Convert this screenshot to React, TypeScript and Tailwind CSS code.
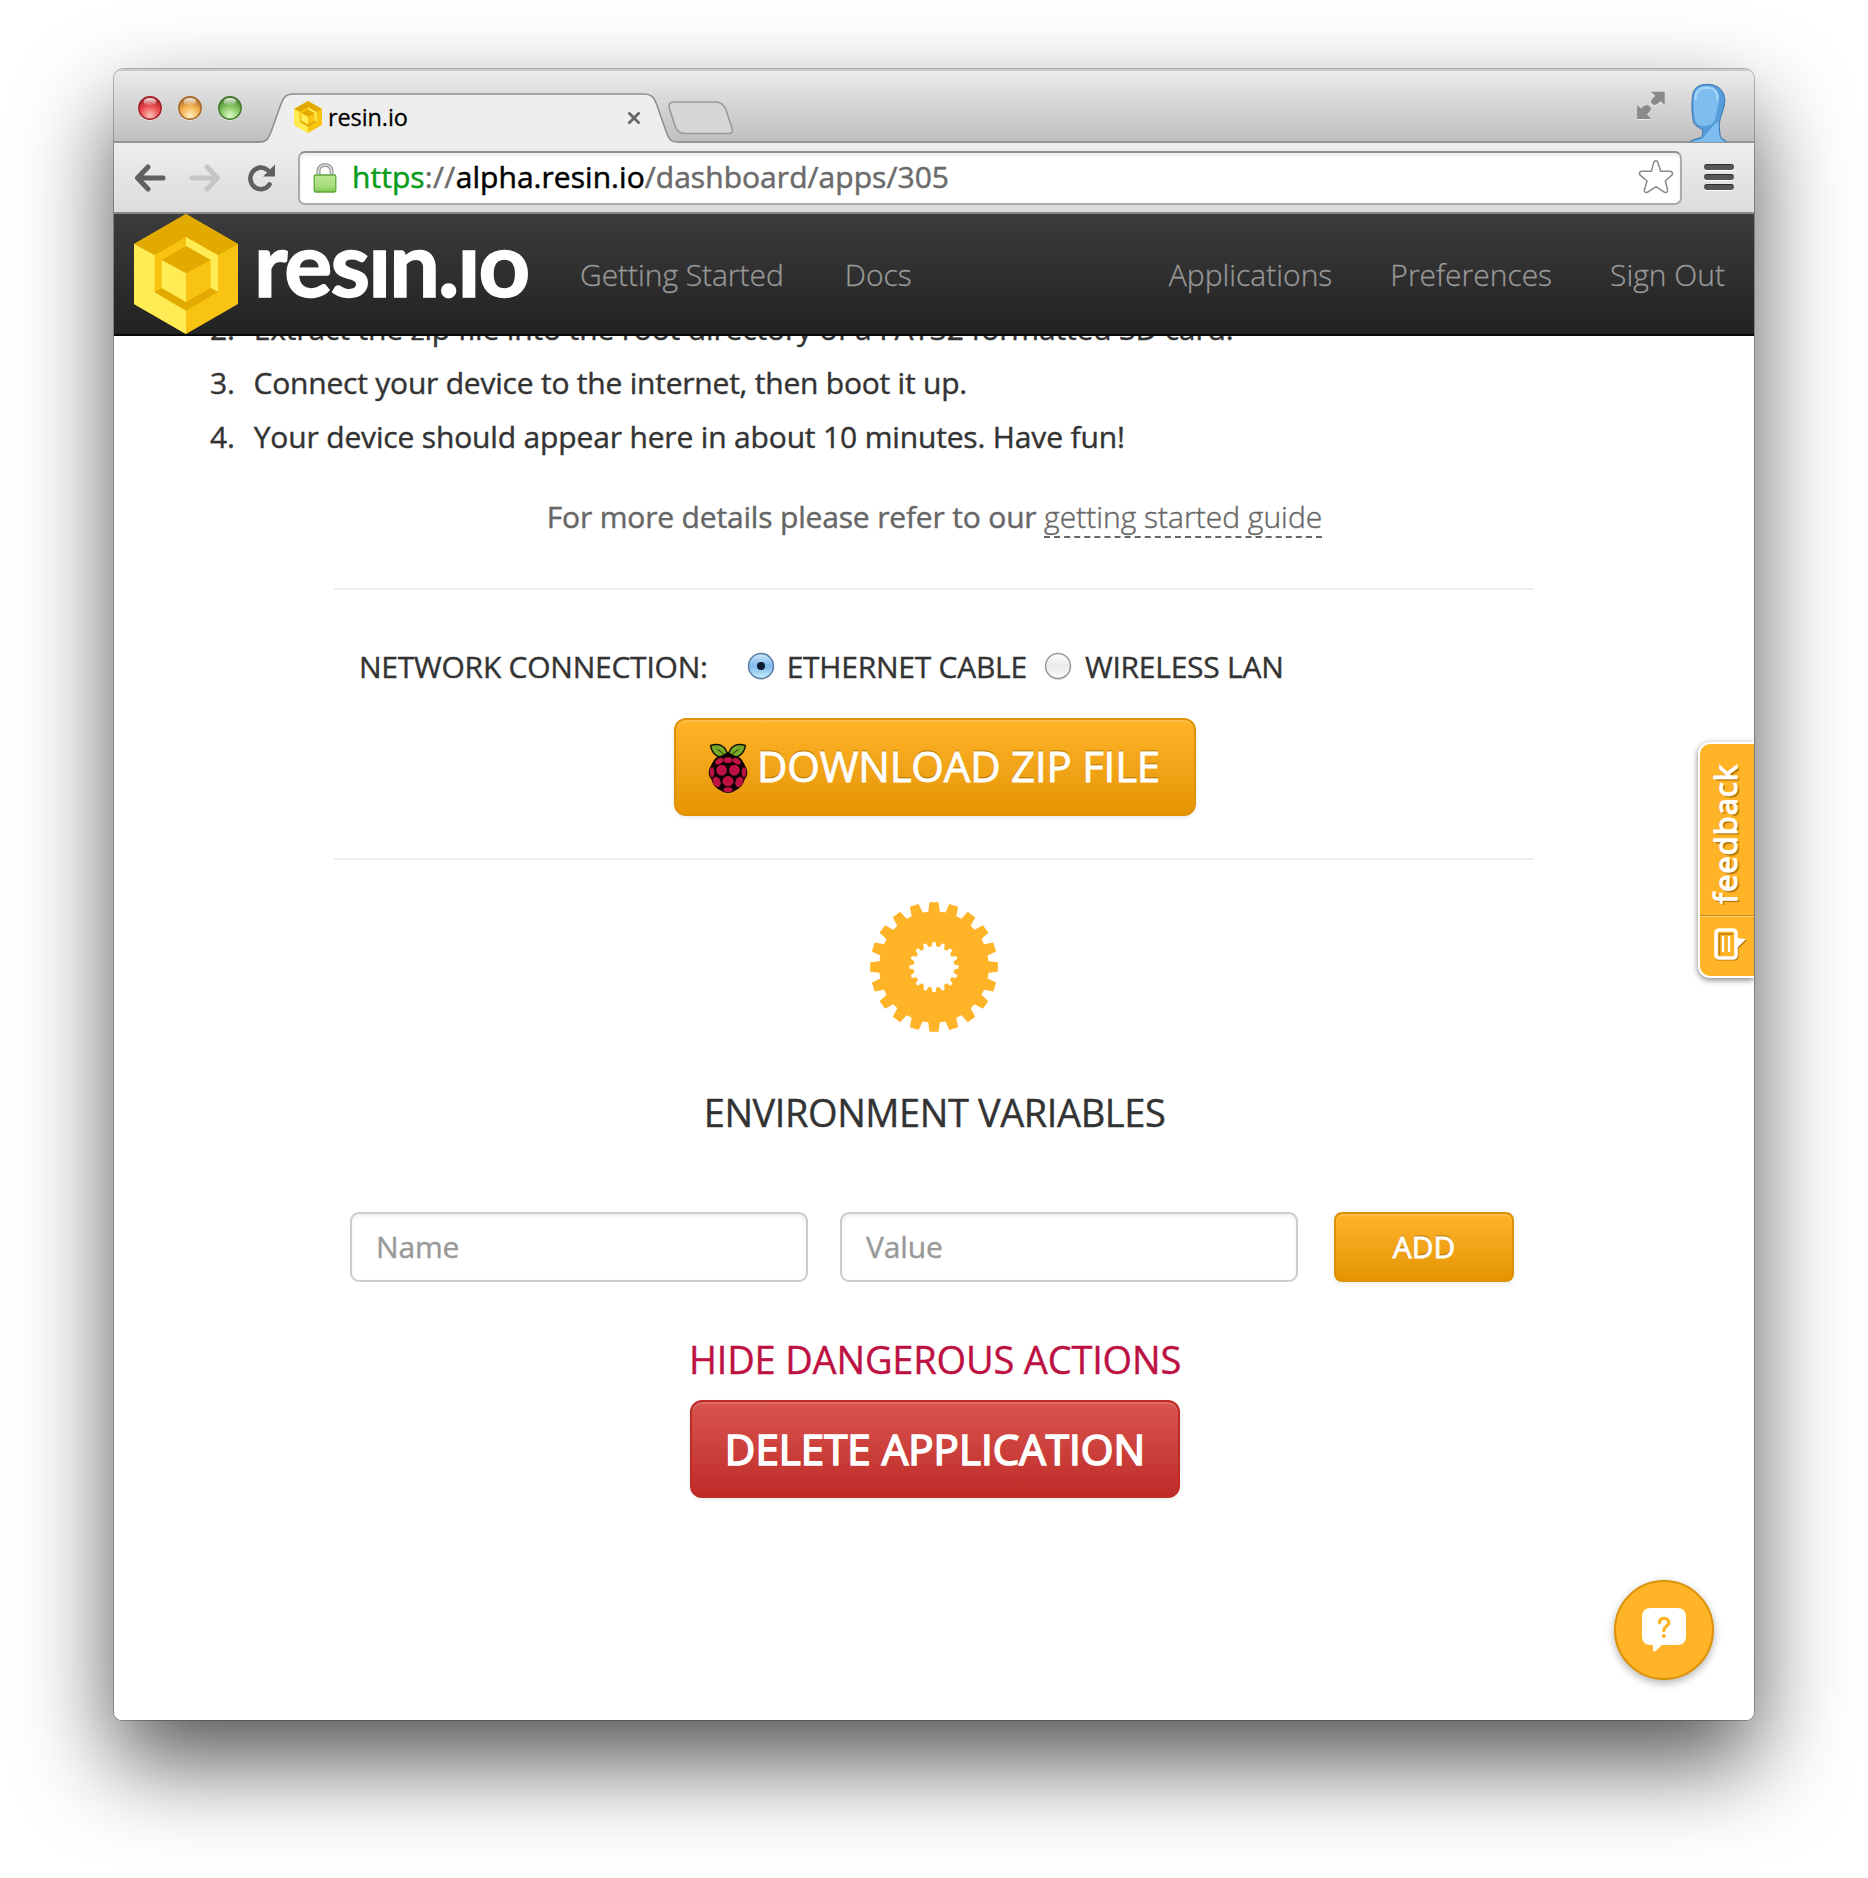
import React from "react";

const ORANGE = "#ffb327";

function CubeLogo({ className }: { className: string }) {
  return (
    <svg viewBox="42 42 312 360" className={className} preserveAspectRatio="none">
      <polygon points="198,42 354,132 354,312 198,402 42,312 42,132" fill="#f8c411" />
      <polygon points="198,42 354,132 294,166 198,111 104,166 42,132" fill="#e2a900" />
      <polygon points="42,132 104,166 104,276 198,332 198,402 42,312" fill="#ffeb53" />
      <polygon points="198,111 294,166 294,276 272,264 272,180 198,138" fill="#ffeb53" />
      <polygon points="104,276 125,264 198,306 272,264 294,276 198,332" fill="#e2a900" />
      <polygon points="198,138 272,180 198,220 125,180" fill="#e2a900" />
      <polygon points="125,180 198,220 198,306 125,264" fill="#ffeb53" />
    </svg>
  );
}

function Light({ id, edge, core, glow }: { id: string; edge: string; core: string; glow: string }) {
  return (
    <svg viewBox="0 0 24 26" className="h-[26px] w-6">
      <defs>
        <radialGradient id={id} cx="50%" cy="85%" r="80%">
          <stop offset="0" stopColor={glow} />
          <stop offset="0.55" stopColor={core} />
          <stop offset="1" stopColor={edge} />
        </radialGradient>
        <linearGradient id={id + "g"} x1="0" y1="0" x2="0" y2="1">
          <stop offset="0" stopColor="#fff" stopOpacity="0.9" />
          <stop offset="1" stopColor="#fff" stopOpacity="0.05" />
        </linearGradient>
      </defs>
      <circle cx="12" cy="13.2" r="11.6" fill="#fff" opacity="0.45" />
      <circle cx="12" cy="12" r="11.2" fill={`url(#${id})`} stroke={edge} strokeWidth="1.4" />
      <ellipse cx="12" cy="5.8" rx="6.4" ry="3.8" fill={`url(#${id}g)`} />
    </svg>
  );
}

function TitleBar() {
  return (
    <div className="flex h-[74px] shrink-0 items-start border-t-2 border-b-2 border-t-[#c9c9c9] border-b-[#949494] bg-linear-to-b from-[#ebebeb] to-[#bfbfbf] pl-6">
      <div className="mt-[25px] flex gap-4">
        <Light id="r" edge="#a3222a" core="#ee4d4f" glow="#fbc3b8" />
        <Light id="y" edge="#a8682a" core="#f4b04c" glow="#fff0c4" />
        <Light id="g" edge="#417a2b" core="#85c660" glow="#e0f9c8" />
      </div>
      <div className="relative mt-[22px] ml-[18px] h-[50px] w-[418px]">
        <svg viewBox="0 0 418 50" className="absolute inset-0 h-[50px] w-[418px]">
          <path
            d="M0 49 C7 49 9 44 11 39 L21 11 C23.500 4 26 1 33 1 H384 C391 1 394 4 396.500 11 L407 41 C409.500 47 411 49 418 49 V50 H0 Z"
            fill="#eeeeee"
          />
          <path
            d="M0 49 C7 49 9 44 11 39 L21 11 C23.500 4 26 1 33 1 H384 C391 1 394 4 396.500 11 L407 41 C409.500 47 411 49 418 49"
            fill="none"
            stroke="#8f8f8f"
            strokeWidth="1.6"
          />
        </svg>
        <div className="relative flex items-center pt-2 pl-[34px]">
          <CubeLogo className="h-8 w-7" />
          <span className="ml-[6px] text-[23.500px] leading-8 tracking-[-0.100px] text-black [-webkit-text-stroke:0.3px]">resin.io</span>
          <svg viewBox="0 0 14 14" className="mt-px mr-[37px] ml-auto h-3.5 w-3.5">
            <path d="M1.500 1.500 L12.500 12.500 M12.500 1.500 L1.500 12.500" stroke="#666" strokeWidth="2.800" />
          </svg>
        </div>
      </div>
      <svg viewBox="0 0 66 34" className="mt-[30px] -ml-2.5 h-[34px] w-[66px]">
        <path
          d="M5 1 H48 C53 1 56 4 58 9 L64 27 C65 31 64 32.500 60 32.500 H17 C12 32.500 9 30 7.500 26 L1.500 8 C0.500 4 1 1 5 1 Z"
          fill="#d6d6d6"
          stroke="#9a9a9a"
          strokeWidth="1.600"
        />
      </svg>
      <svg viewBox="48 62 86 88" className="mt-5 ml-auto h-[29px] w-[28.500px]">
        <g fill="#fff" opacity="0.6" transform="translate(0 3)">
          <path d="M90 64 H132 V105 L120 93 L106 104 Q92 104 91 92 Q94 84 103 77 Z" />
          <path d="M48 105 L61 116 Q68 104 80 105 Q91 109 90 118 Q88 126 78 133 L91 147 H48 Z" />
        </g>
        <path d="M90 64 H132 V105 L120 93 L106 104 Q92 106 90 94 Q92 86 103 77 Z" fill="#8a8a8a" />
        <path d="M48 105 L61 116 Q68 104 80 105 Q91 109 90 118 Q88 126 78 133 L91 147 H48 Z" fill="#8a8a8a" />
      </svg>
      <svg viewBox="207 38 114 178" className="mt-[12px] mr-[27px] ml-[24px] h-[59px] w-[38px]">
        <path
          d="M208 218 C214 207 235 207 246 200 L249 182 C243 173 228 172 221 158 C215 135 214 105 217 78 C219 52 238 42 262 42 C292 42 314 58 315 90 C315 115 302 135 299 155 C297 175 300 195 303 204 C310 208 318 211 321 218 Z"
          fill="#559cd8"
          stroke="#3f76ae"
          strokeWidth="3"
        />
        <path
          d="M222 82 C219 110 221 140 227 156 C234 168 252 172 262 166 C272 166 282 158 286 145 C290 128 292 112 297 98 C301 68 290 48 262 47 C235 47 223 58 222 82 Z"
          fill="#7ebdf0"
        />
        <path d="M226 90 C226 60 240 52 262 52 C284 53 295 66 292 90" fill="none" stroke="#a5d5f8" strokeWidth="7" />
        <path d="M284 162 L297 154 C294 178 297 198 304 208 L316 218 H214 C224 209 244 212 253 200 C262 186 274 178 284 162 Z" fill="#7ebdf0" />
      </svg>
    </div>
  );
}

function Toolbar() {
  return (
    <div className="flex h-[71px] shrink-0 items-center border-b-2 border-[#8a8a8a] bg-linear-to-b from-[#eeeeee] to-[#dcdcdc] pl-5">
      <svg viewBox="0 0 32 28" className="h-7 w-8" fill="none" stroke="#5f5f5f" strokeWidth="5" strokeLinecap="round" strokeLinejoin="round">
        <path d="M14 3 L3.500 14 L14 25 M4.500 14 H29" />
      </svg>
      <svg viewBox="0 0 32 28" className="ml-[23px] h-7 w-8" fill="none" stroke="#c6c6c6" strokeWidth="5" strokeLinecap="round" strokeLinejoin="round">
        <path d="M18 3 L28.500 14 L18 25 M27.500 14 H3" />
      </svg>
      <svg viewBox="0 0 28 28" className="ml-[27px] h-7 w-7">
        <path d="M21.500 20.500 A10.500 10.800 0 1 1 19.500 6" fill="none" stroke="#5f5f5f" strokeWidth="4.600" strokeLinecap="round" />
        <path d="M27 0.500 V12.500 H15 Z" fill="#5f5f5f" />
      </svg>
      <div className="ml-[22px] flex h-[54px] w-[1384px] items-center rounded-[7px] border-2 border-[#ababab] border-t-[#8f8f8f] bg-white pr-[6px] pl-[13px] shadow-[inset_0_3px_3px_rgba(0,0,0,0.07)]">
        <svg viewBox="0 0 24 30" className="h-[30px] w-6">
          <defs>
            <linearGradient id="lock" x1="0" y1="0" x2="0" y2="1">
              <stop offset="0" stopColor="#bfe896" />
              <stop offset="0.700" stopColor="#a3dc78" />
              <stop offset="1" stopColor="#7cc251" />
            </linearGradient>
          </defs>
          <path d="M5.500 13 V8 C5.500 0 18.500 0 18.500 8 V13" fill="none" stroke="#989898" strokeWidth="4" />
          <path d="M5.500 13 V8 C5.500 0 18.500 0 18.500 8 V13" fill="none" stroke="#e2e2e2" strokeWidth="1.600" />
          <rect x="1.200" y="12" width="21.600" height="17" rx="1.500" fill="url(#lock)" stroke="#5fa83b" strokeWidth="1.300" />
        </svg>
        <div className="-mt-0.5 ml-[15px] text-[30px] leading-[46px] tracking-[0.040px] whitespace-nowrap text-[#6b6b6b] [-webkit-text-stroke:0.500px]">
          <span className="text-[#0a9c1a]">https</span>
          <span className="tracking-[0.400px]">://</span>
          <span className="text-black">alpha.resin.io</span>/dashboard/apps/305
        </div>
        <svg viewBox="54 268 106 102" className="-mt-0.5 ml-auto h-[34px] w-9" fill="none" stroke="#8a8a8a" strokeWidth="4.500" strokeLinejoin="round">
          <path d="M101 273 Q107 267 112 273 L121 302 L150 302 Q159 305 156 312 L135 331 L142 358 Q142 367 133 365 L107 348 L81 365 Q72 367 72 358 L80 331 L58 312 Q55 304 64 302 L93 302 Z" />
        </svg>
      </div>
      <div className="-mt-px ml-[22px] flex flex-col gap-1">
        <div className="h-[6px] w-[30px] rounded-[3px] border-t border-[#2e2e2e] bg-[#565656] shadow-[0_1px_0_#fff]" />
        <div className="h-[6px] w-[30px] rounded-[3px] border-t border-[#2e2e2e] bg-[#565656] shadow-[0_1px_0_#fff]" />
        <div className="h-[6px] w-[30px] rounded-[3px] border-t border-[#2e2e2e] bg-[#565656] shadow-[0_1px_0_#fff]" />
      </div>
    </div>
  );
}

function NavBar() {
  return (
    <nav className="flex h-[122px] shrink-0 items-center border-b-2 border-[#080808] bg-linear-to-b from-[#3c3c3c] to-[#222222] pr-[29px] pl-5 text-[30px] leading-10 font-light text-[#999999] [-webkit-text-stroke:0.3px]">
      <CubeLogo className="h-[120px] w-[104px]" />
      <div className="ml-4 h-[50px] w-[286px] overflow-hidden">
        <div className="-mt-3 font-['Lato'] text-[90px] leading-[50px] font-bold tracking-[-1.900px] whitespace-nowrap text-white [-webkit-text-stroke:1.5px]">resin.io</div>
      </div>
      <a className="mt-0.5 ml-10 tracking-[-0.050px]">Getting Started</a>
      <a className="mt-0.5 ml-[61px]">Docs</a>
      <a className="mt-0.5 ml-auto">Applications</a>
      <a className="mt-0.5 ml-[58px]">Preferences</a>
      <a className="mt-0.5 ml-[58px]">Sign Out</a>
    </nav>
  );
}

function Radio({ checked }: { checked?: boolean }) {
  const id = checked ? "radio-on" : "radio-off";
  return (
    <svg viewBox="0 0 28 28" className="h-7 w-7">
      <defs>
        <linearGradient id={id} x1="0" y1="0" x2="0" y2="1">
          <stop offset="0" stopColor={checked ? "#cfe6fa" : "#ffffff"} />
          <stop offset="0.500" stopColor={checked ? "#7db9ec" : "#e9e9e9"} />
          <stop offset="1" stopColor={checked ? "#c9f0ff" : "#fbfbfb"} />
        </linearGradient>
      </defs>
      <circle cx="14" cy="15" r="13" fill="#000" opacity="0.120" />
      <circle cx="14" cy="14" r="12.500" fill={`url(#${id})`} stroke={checked ? "#5a7fa8" : "#9b9b9b"} strokeWidth="1.500" />
      {checked && <circle cx="14" cy="14" r="4" fill="#0b1a30" />}
    </svg>
  );
}

function Raspberry() {
  return (
    <svg viewBox="54 40 120 152" className="mt-0.5 h-[51px] w-10">
      <g fill="#75a928" stroke="#101008" strokeWidth="4.500" strokeLinejoin="round">
        <path d="M113 80 C88 88 66 76 62 47 C86 40 110 46 113 80 Z" />
        <path d="M115 80 C140 88 162 76 166 47 C142 40 118 46 115 80 Z" />
      </g>
      <path d="M82 58 L108 78 M146 58 L120 78" stroke="#101008" strokeWidth="2.500" />
      <path
        d="M114 66 C126 78 145 78 154 88 C161 96 162 104 168 112 C174 126 173 138 164 148 C160 166 148 176 134 183 C124 192 104 192 94 183 C80 176 68 166 64 148 C55 138 54 126 60 112 C66 104 67 96 74 88 C83 78 102 78 114 66 Z"
        fill="#0d0005"
      />
      <g fill="#bc1142">
        <ellipse cx="88" cy="94" rx="13" ry="8.500" transform="rotate(-32 88 94)" />
        <ellipse cx="140" cy="94" rx="13" ry="8.500" transform="rotate(32 140 94)" />
        <ellipse cx="114" cy="91" rx="13" ry="8.500" />
        <ellipse cx="95" cy="121" rx="16" ry="16.500" />
        <ellipse cx="133" cy="121" rx="16" ry="16.500" />
        <ellipse cx="66" cy="127" rx="6.500" ry="15" />
        <ellipse cx="162" cy="127" rx="6.500" ry="15" />
        <ellipse cx="114" cy="154" rx="16.500" ry="15.500" />
        <ellipse cx="80" cy="156" rx="11.500" ry="16" transform="rotate(-22 80 156)" />
        <ellipse cx="148" cy="156" rx="11.500" ry="16" transform="rotate(22 148 156)" />
        <ellipse cx="114" cy="180" rx="14" ry="7.500" />
      </g>
    </svg>
  );
}

// Closed outline of a toothed ring; base and tip are tooth widths at the root and outer radii.
function toothedRing(n: number, root: number, outer: number, base: number, tip: number) {
  const points: string[] = [];
  for (let i = 0; i < n; i++) {
    const a = (i * 2 * Math.PI) / n - Math.PI / 2;
    const at = (r: number, half: number) => {
      const d = Math.sqrt(r * r - half * half);
      return `${(195 + d * Math.cos(a) - half * Math.sin(a)).toFixed(1)},${(195 + d * Math.sin(a) + half * Math.cos(a)).toFixed(1)}`;
    };
    points.push(at(root, -base / 2), at(outer, -tip / 2), at(outer, tip / 2), at(root, base / 2));
  }
  return points.join(" ");
}

function Gear() {
  return (
    <svg viewBox="0 0 390 390" preserveAspectRatio="none" className="h-[130px] w-[128px]">
      <polygon points={toothedRing(20, 167, 195, 35, 28)} fill={ORANGE} />
      <polygon points={toothedRing(16, 62, 75, 15, 9)} fill="#fff" />
    </svg>
  );
}

const primary =
  "border-2 border-[#de9306] bg-linear-to-b from-[#ffb327] to-[#e59500] text-white shadow-[inset_0_2px_0_rgba(255,255,255,0.15),0_2px_4px_rgba(0,0,0,0.08)] [-webkit-text-stroke:0.800px] [text-shadow:0_-2px_0_rgba(0,0,0,0.2)]";

const field =
  "h-[70px] w-[458px] rounded-[9px] border-2 border-[#cccccc] bg-white px-6 pb-0.5 text-[30px] tracking-[-0.150px] placeholder-[#999999] shadow-[inset_0_2px_4px_rgba(0,0,0,0.07)] outline-none [-webkit-text-stroke:0.4px]";

function Content() {
  return (
    <main className="relative min-h-0 flex-1 overflow-hidden bg-white text-[#333333] [-webkit-text-stroke:0.4px]">
      <ol className="-mt-[34px] pl-[96px] text-[30px] leading-[54px]">
        <li className="flex gap-[19px] tracking-[-0.150px]"><span>2.</span><span>Extract the zip file into the root directory of a FAT32 formatted SD card.</span></li>
        <li className="flex gap-[19px] tracking-[-0.220px]"><span>3.</span><span>Connect your device to the internet, then boot it up.</span></li>
        <li className="flex gap-[19px] tracking-[-0.160px]"><span>4.</span><span>Your device should appear here in about 10 minutes. Have fun!</span></li>
      </ol>
      <p className="mt-[26px] flex h-[53px] items-start justify-center pl-px text-[30px] leading-[54px] text-[#666666]">
        <span className="tracking-[-0.170px] whitespace-pre">For more details please refer to our </span>
        <span className="h-[48px] border-b-2 border-dashed border-[#666666] font-light">getting started guide</span>
      </p>
      <div className="mx-auto flex w-[1200px] flex-col items-center">
        <hr className="mt-[45px] w-full border-t-2 border-[#eeeeee]" />
        <div className="mt-[56px] flex h-10 items-center self-start pl-[25px] text-[30px] leading-10 tracking-[-0.240px]">
          <span className="pt-px">NETWORK CONNECTION:</span>
          <span className="ml-[39px] flex"><Radio checked /></span>
          <span className="ml-[12px] pt-px">ETHERNET CABLE</span>
          <span className="ml-[17px] flex"><Radio /></span>
          <span className="ml-[13px] pt-px">WIRELESS LAN</span>
        </div>
        <button className={`mt-8 ml-0.5 flex h-[98px] w-[522px] items-center rounded-xl pl-[32px] ${primary}`}>
          <Raspberry />
          <span className="-mt-0.5 ml-[9px] text-[42px] leading-[60px] tracking-[-0.220px] whitespace-nowrap">DOWNLOAD ZIP FILE</span>
        </button>
        <hr className="mt-[42px] w-full border-t-2 border-[#eeeeee]" />
        <div className="mt-[42px]"><Gear /></div>
        <h2 className="mt-[55px] ml-px text-[38px] leading-[50px] tracking-[-0.420px]">ENVIRONMENT VARIABLES</h2>
        <div className="mt-[75px] flex self-start pl-4">
          <input className={field} placeholder="Name" />
          <input className={`ml-8 ${field}`} placeholder="Value" />
          <button className={`ml-9 h-[70px] w-[180px] rounded-lg pb-0.5 text-[30px] ${primary}`}>ADD</button>
        </div>
        <a className="mt-[52px] ml-0.5 text-[38px] leading-[50px] tracking-[-0.180px] text-[#bc1142]">HIDE DANGEROUS ACTIONS</a>
        <button className="mt-4 ml-0.5 h-[98px] w-[490px] rounded-xl border-2 border-[#bd2b27] bg-linear-to-b from-[#d9534f] to-[#bf2a27] text-[42px] leading-[60px] tracking-[0.050px] whitespace-nowrap text-white shadow-[inset_0_2px_0_rgba(255,255,255,0.15),0_2px_4px_rgba(0,0,0,0.08)] [-webkit-text-stroke:1.700px_white]">
          DELETE APPLICATION
        </button>
      </div>

      <div className="absolute top-[406px] right-0 flex h-[236px] w-[56px] flex-col rounded-l-xl border-2 border-r-0 border-white bg-[#ffb327] text-white shadow-[0_2px_6px_rgba(0,0,0,0.5)]">
        <div className="flex h-[172px] items-center justify-center border-b border-[#c98a1c] pt-2 pr-1">
          <span className="rotate-180 text-[31px] leading-[40px] tracking-[1px] [-webkit-text-stroke:1.2px] [text-shadow:-2px_2px_1px_rgba(140,90,0,0.7)] [writing-mode:vertical-rl]">feedback</span>
        </div>
        <div className="flex flex-1 items-center border-t border-[#ffcf70] pb-1.5 pl-[12px]">
          <svg viewBox="0 0 36 36" className="h-9 w-9">
            <path d="M4 33.500 H23 Q25.500 33.500 25.500 30 V22 L34 14" stroke="#b97b10" fill="none" strokeWidth="2" />
            <path d="M7 8 H21 M7.500 8 V29" stroke="#b97b10" fill="none" strokeWidth="1.500" />
            <rect x="4" y="4" width="20" height="28" rx="3" fill="none" stroke="#fff" strokeWidth="3.600" />
            <path d="M25 12 L34 13 L25 22 Z" fill="#fff" />
            <path d="M11 10 V26 M17 10 V26" stroke="#fff" strokeWidth="2.200" />
          </svg>
        </div>
      </div>

      <button className="absolute right-10 bottom-10 flex h-[100px] w-[100px] items-center justify-center rounded-full border-2 border-[#dc9207] bg-[#ffb327] shadow-[0_3px_8px_rgba(0,0,0,0.3)]">
        <svg viewBox="0 0 44 44" className="h-11 w-11">
          <path d="M9 0 H35 Q44 0 44 9 V28 Q44 37 35 37 H20 L13 43.500 Q11 44 11 42 V37 H9 Q0 37 0 28 V9 Q0 0 9 0 Z" fill="#fff" />
          <path d="M17.500 14.500 C17.500 9 26.800 9 26.800 14.700 C26.800 18.500 21.800 18 21.800 22.500" fill="none" stroke={ORANGE} strokeWidth="3.400" strokeLinecap="round" />
          <circle cx="21.800" cy="28" r="2" fill={ORANGE} />
        </svg>
      </button>
    </main>
  );
}

export default function App() {
  return (
    <div className="flex h-[1878px] w-[1868px] items-start justify-center overflow-hidden bg-white pt-[69px] font-['Open_Sans','Noto_Sans',sans-serif]">
      <div className="flex h-[1651px] w-[1640px] flex-col overflow-hidden rounded-t-[10px] rounded-b-[8px] shadow-[0_0_0_1px_rgba(0,0,0,0.25),0_42px_92px_rgba(0,0,0,0.67)]">
        <TitleBar />
        <Toolbar />
        <NavBar />
        <Content />
      </div>
    </div>
  );
}
